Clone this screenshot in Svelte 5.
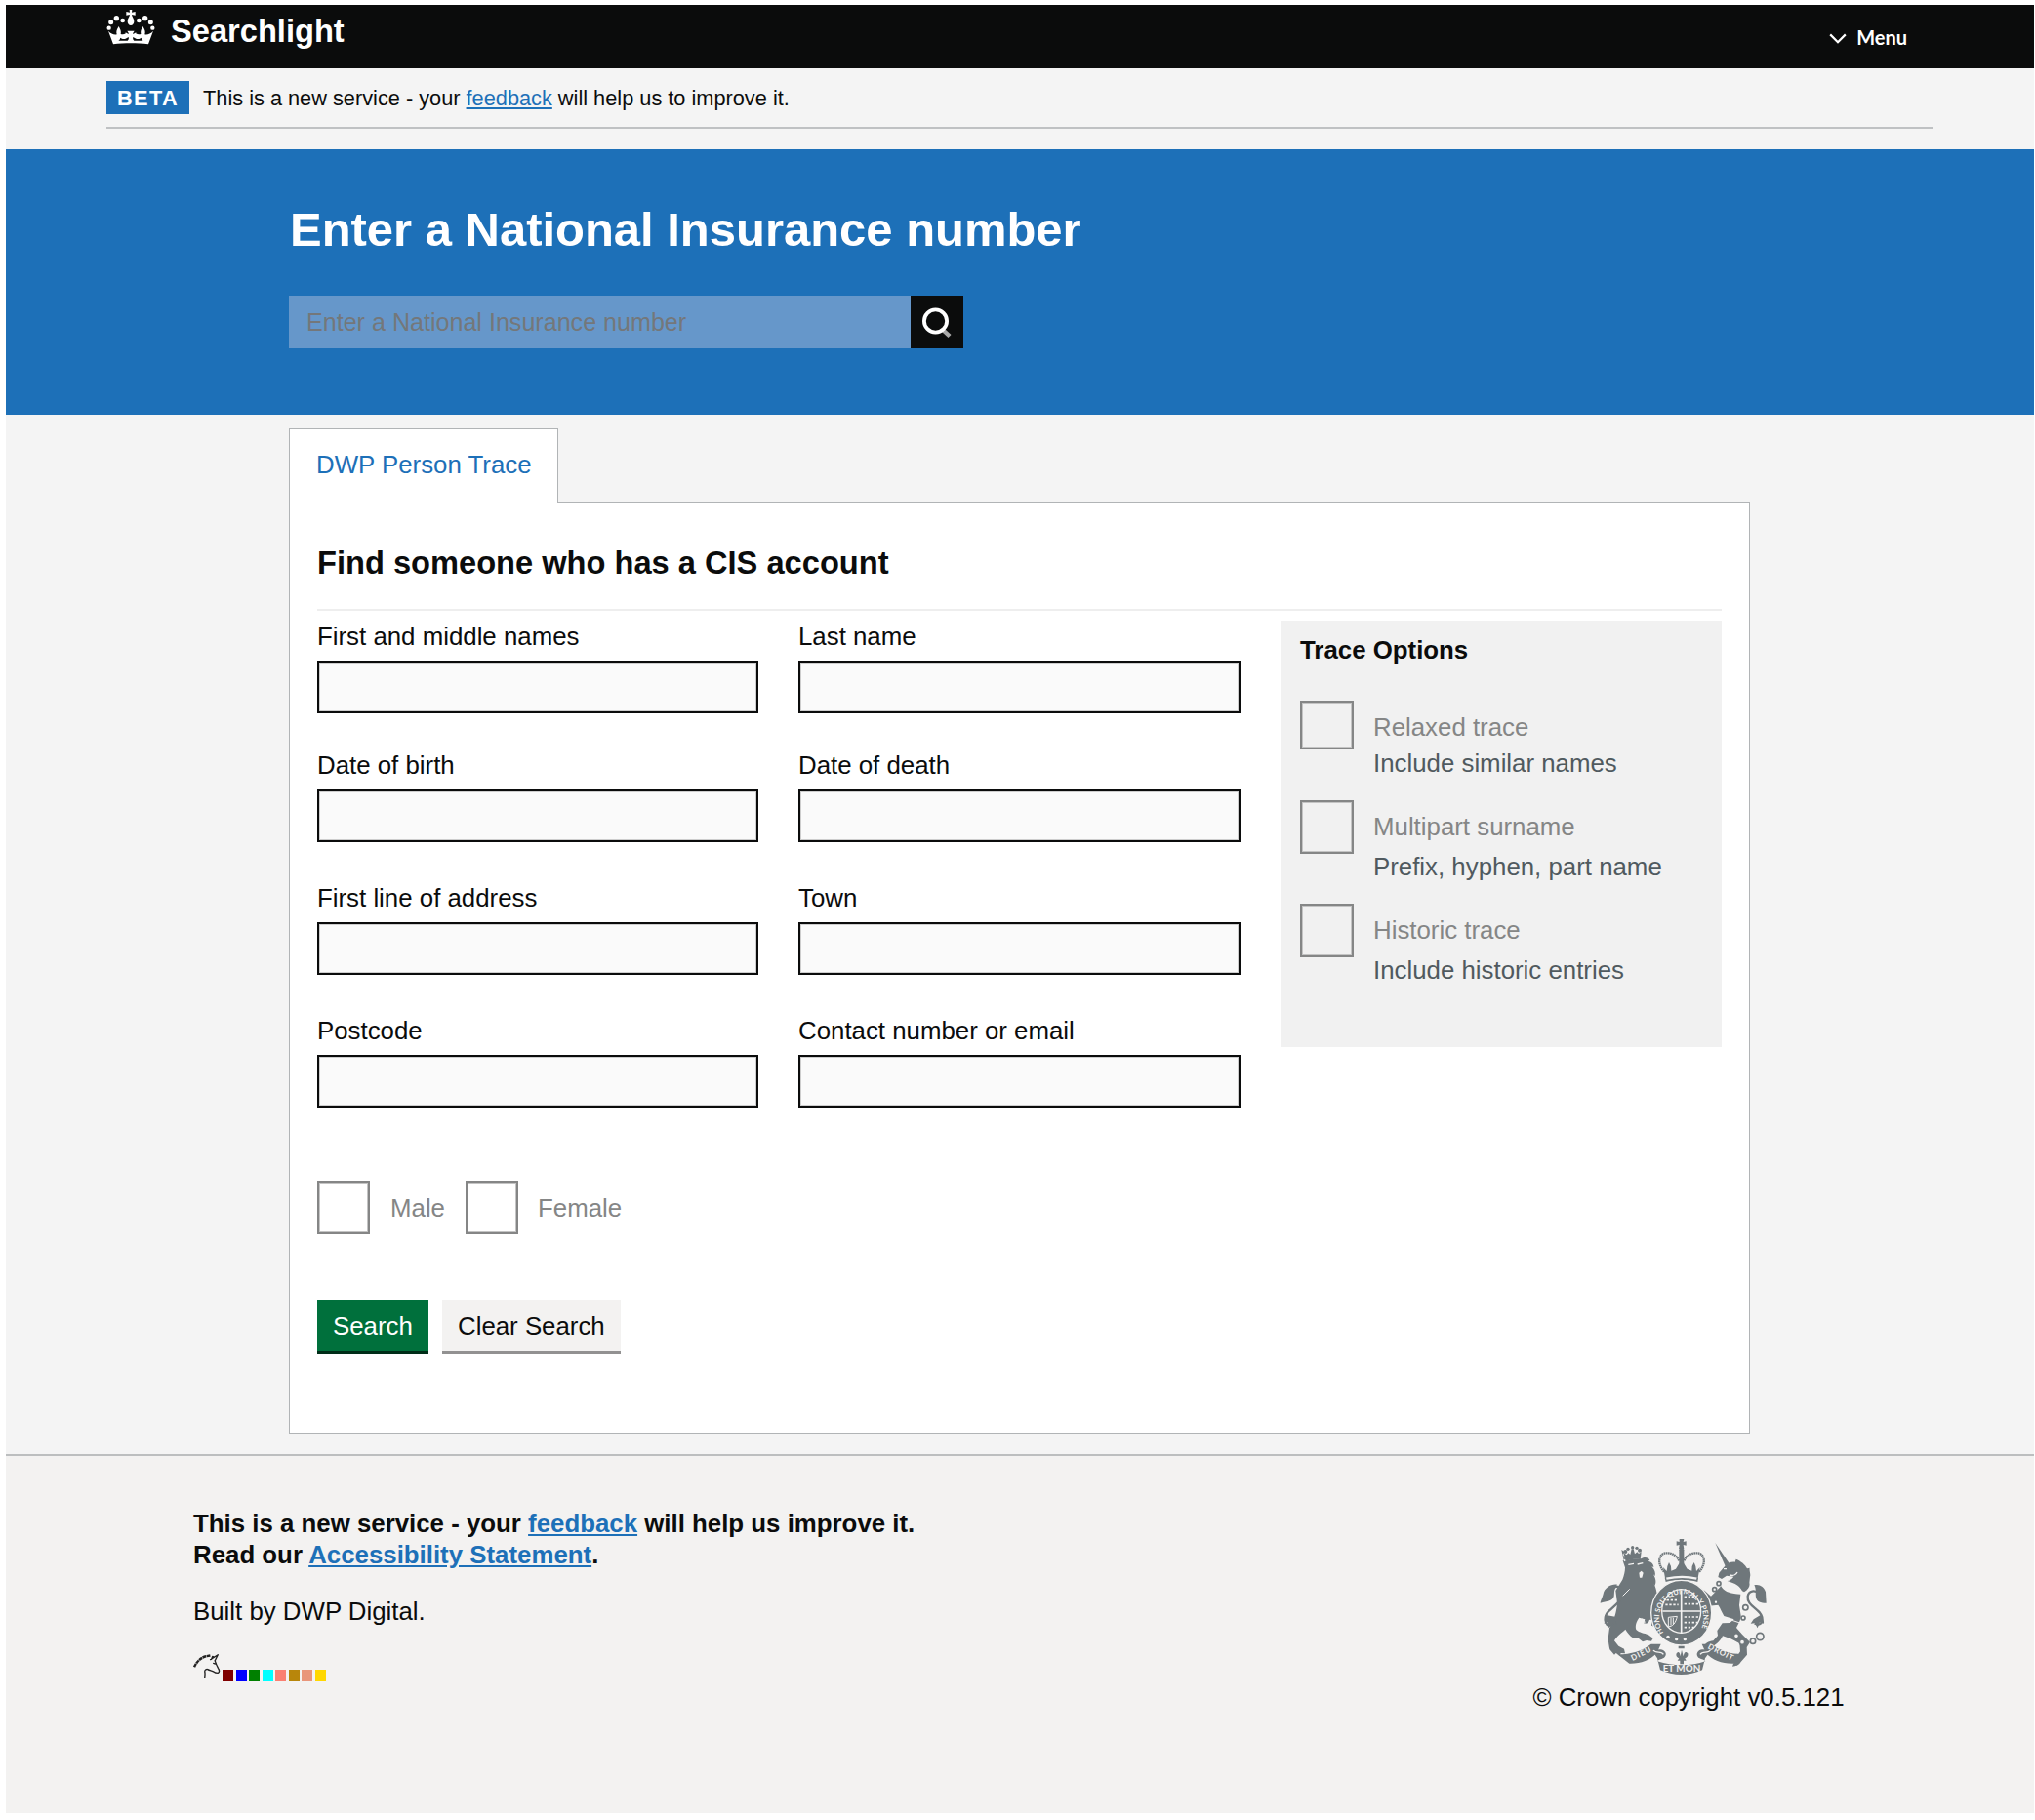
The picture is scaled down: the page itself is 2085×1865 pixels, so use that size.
<script lang="ts">
  const fields = [
    'First and middle names', 'Last name',
    'Date of birth', 'Date of death',
    'First line of address', 'Town',
    'Postcode', 'Contact number or email'
  ];
  const options = [
    { label: 'Relaxed trace', hint: 'Include similar names', size: 'short' },
    { label: 'Multipart surname', hint: 'Prefix, hyphen, part name', size: 'tall' },
    { label: 'Historic trace', hint: 'Include historic entries', size: 'tall' }
  ];
  const swatches = ['maroon', 'blue', 'green', 'cyan', 'salmon', 'darkgoldenrod', 'darksalmon', 'gold'];
</script>

<div class="page">
  <header class="top">
    <div class="brand">
      <svg class="crown" viewBox="0 0 150 108" aria-hidden="true">
        <g fill="#fff">
          <circle cx="8" cy="56" r="6.5" /><circle cx="14" cy="38" r="7.5" /><circle cx="31" cy="26" r="8" /><circle cx="50" cy="33" r="7" />
          <circle cx="142" cy="56" r="6.5" /><circle cx="136" cy="38" r="7.5" /><circle cx="119" cy="26" r="8" /><circle cx="100" cy="33" r="7" />
          <path d="M71 0h8l-1 8 11-2v11l-11-2c1 7 7 13 7 21 0 6-4 12-10 12s-10-6-10-12c0-8 6-14 7-21l-11 2V6l11 2z" />
          <path fill-rule="evenodd" d="M21 106 6 65c8 9 18 13 26 11-3-8 0-16 6-25 5 9 8 16 6 24 6 2 11 1 15-2v16c-7 2-12 0-16-3-1 5-3 7-6 9h28c4-3 4-7 3-11l-9 5V70l9 5c1-4-1-6-4-10h22c-3 4-5 6-4 10l9-5v19l-9-5c-1 4-1 8 3 11h28c-3-2-5-4-6-9-4 3-9 5-16 3V73c4 3 9 4 15 2-2-8 1-15 6-24 6 9 9 17 6 25 8 2 18-2 26-11l-15 41c-34-4-74-4-108 0z" />
        </g>
      </svg>
      <span class="brand-name">Searchlight</span>
    </div>
    <div class="menu">
      <svg class="chevron" viewBox="0 0 18 11" aria-hidden="true"><path d="M1.2 1.4 9 9.2l7.8-7.8" fill="none" stroke="#fff" stroke-width="2.2" /></svg>
      <span>Menu</span>
    </div>
  </header>

  <div class="phase">
    <div class="phase-inner">
      <strong class="tag">BETA</strong>
      <span class="phase-text">This is a new service - your <a>feedback</a> will help us to improve it.</span>
    </div>
  </div>

  <section class="hero">
    <h1>Enter a National Insurance number</h1>
    <div class="search">
      <div class="search-box">Enter a National Insurance number</div>
      <div class="search-button">
        <svg viewBox="0 0 54 54" aria-hidden="true">
          <path d="m33.5 35.5 6.5 6" stroke="#a9a9a9" stroke-width="4.4" fill="none" />
          <circle cx="25.5" cy="26" r="11.6" stroke="#fff" stroke-width="3.8" fill="none" />
        </svg>
      </div>
    </div>
  </section>

  <main>
    <div class="tab">DWP Person Trace</div>
    <div class="panel">
      <h2>Find someone who has a CIS account</h2>
      <div class="columns">
        <div class="fields">
          {#each fields as f}
            <div class="field">
              <span class="label">{f}</span>
              <div class="input"></div>
            </div>
          {/each}
        </div>
        <aside class="trace">
          <h3>Trace Options</h3>
          {#each options as o}
            <div class="option {o.size}">
              <div class="check"></div>
              <div class="option-text">
                <span class="option-label">{o.label}</span>
                <span class="hint">{o.hint}</span>
              </div>
            </div>
          {/each}
        </aside>
      </div>
      <div class="sexes">
        <div class="check"></div><span class="sex male">Male</span>
        <div class="check"></div><span class="sex">Female</span>
      </div>
      <div class="buttons">
        <div class="button primary">Search</div>
        <div class="button secondary">Clear Search</div>
      </div>
    </div>
  </main>

  <footer>
    <div class="foot-left">
      <p class="bold">This is a new service - your <a>feedback</a> will help us improve it.</p>
      <p class="bold">Read our <a>Accessibility Statement</a>.</p>
      <p class="built">Built by DWP Digital.</p>
      <div class="logo-row">
        <svg class="unicorn" viewBox="0 0 81 75" aria-hidden="true">
          <g fill="none" stroke="#222" stroke-linecap="round" stroke-linejoin="round">
            <path d="M3 38C10 23 23 9 40 6l11-2" stroke-width="7" stroke-dasharray="11 1.5" stroke-linecap="butt" />
            <path d="M51 16 73 2 64 20M54 15l3-8 5 2M64 19c3 9 6 16 10 23 4 6 4 12-1 14l-8-1c-7-6-16-6-22-10-5-1-9 2-9 7 2 6 0 12 0 18M60 27l5 2" stroke-width="4" />
          </g>
        </svg>
        {#each swatches as c}
          <i class="swatch" style="background:{c}"></i>
        {/each}
      </div>
    </div>
    <div class="foot-right">
      <svg class="arms" viewBox="0 0 570 465" aria-hidden="true">
        <g fill="#6f777b">
          <!-- centre crown -->
          <path d="M269 21h14l-2 9 9-2v13l-9-2 2 13h-16l2-13-9 2V28l9 2z" />
          <rect x="268" y="50" width="15" height="52" rx="5" />
          <g fill="none" stroke="#6f777b">
            <path d="M222 122c-24-28-16-58 8-58 18 0 32 9 38 25M330 122c24-28 16-58-8-58-18 0-33 9-39 25" stroke-width="7" stroke-dasharray="5 1.5" />
          </g>
          <path d="M219 108l11 12 2-15 5-12 6 12 1 14 14-6 10-16h15l10 16 14 6 1-14 6-12 5 12 2 15 11-12-7 38c-31-8-68-8-99 0z" />
          <path d="M224 140c32-9 72-9 103 0l-2 13c-30-8-68-8-98 0z" />
          <path d="M229 143c31-7 66-7 93 0" fill="none" stroke="#f3f2f1" stroke-width="7" />
          <!-- lion crown -->
          <g>
            <circle cx="125" cy="47" r="5" /><circle cx="103" cy="60" r="6" /><circle cx="111" cy="52" r="5" /><circle cx="138" cy="49" r="5" /><circle cx="147" cy="56" r="6" />
            <path d="M97 64l10 6 5-6 6 5 4-17h6l4 15 7-6 5 5 8-5-3 23c-15-3-30 0-45 6z" />
          </g>
          <!-- lion -->
          <path d="M99 91c14-8 32-11 52-9 12-7 22-4 27 4l-5 3c12 3 17 11 17 19l-6-2c10 10 12 20 10 29l-5-5c8 14 9 24 5 34l-4-7c5 10 8 20 9 28 8 6 12 15 10 24l-9 10c5 14 0 23-7 28l10 12c4 15-3 26-10 32l-10-4 2-16-8-2c-2 9-7 14-17 12l3-13-18-5c-8 12-13 24-9 37 10 10 25 10 38 16l14 10-5 9-15-2-12 4-13-11-17-1c-9-6-17-16-23-26-9 9-28 22-34 35l13 16 17 9 3 14-13-1-3 8-12-8-5 5-14-16c-4-20-5-31-4-43l3-23c14-22 22-50 24-77l-5-38 21-34c5-13 8-25 8-37l-7-21 8-6-8-14 6-7-10-7z" />
          <!-- lion tail -->
          <path d="M67 280C43 303 31 263 50 245c22-20 47-39 45-62-3-20-27-20-35-4" fill="none" stroke="#6f777b" stroke-width="7" />
          <path d="M78 161c-17-3-40 10-43 29-4 15-8 20-9 28 19-6 38-6 42-21 2-13-2-17 10-36zM39 254c4 11 0 20-1 28l10-5 4 18 11-14 15 3c-9-8-6-14 2-22z" />
          <!-- unicorn -->
          <path d="m379 33 43 63-12 9z" />
          <path d="M409 104c9-9 20-14 31-12l3-9c15 6 29 17 34 29l8-2c-2 9 4 18 1 28l-2 18c3 11-4 20-16 28l-6-3c-10-19-27-25-46-31 7-1 14-5 20-13l-22-3-15 10-11-6 3-13z" />
          <path d="M397 166c8 17 28 24 60 25l-4 34 5 32-3 15-11 22 18 20 24 24-10 16 1 23-19 22c-5 10-15 14-26 14l8-22 16-24-2-25-27-14-25-9c-6 14-20 27-29 31l-29 3c2-11 15-17 29-19l14-16-2-15 16-23 23-1 13-11-31-10c-7-12-11-24-18-34l-28 3-13 15 9 18-14-8-2-24 18-15-19-18-23 5-5-10 12-12 23 1 20 18z" />
          <!-- unicorn tail -->
          <path d="M500 280c28 14 27-19 16-32-17-18-40-28-37-51 3-18 23-20 34-8" fill="none" stroke="#6f777b" stroke-width="7" />
          <path d="M499 163c16-4 30 5 35 21l2 34c-17 0-29-4-32-18-2-14 2-25-5-37zM522 253c1 12 8 19 6 28l-12-4-7 18-8-15-13 1 9-13z" />
          <!-- garter -->
          <ellipse cx="275" cy="248" rx="93" ry="100" stroke="#f3f2f1" stroke-width="4" />
          <path d="M266 350h18v8h-18zM260 373c8-10 11 0 12 9l4-20 5 20c2-11 6-18 14-9 2 9-4 14-9 15l4 7h-8v11h-11v-11h-8l5-7c-6-2-11-7-8-15z" />
          <!-- scroll -->
          <path d="M79 376c44-1 74-10 103-32l30 0-12 27c-20 23-52 34-85 33z" />
          <path d="M471 376c-44-1-74-10-103-32l-30 0 12 27c20 23 52 34 85 33z" />
          <path d="M188 368c9-9 26-9 34-3 9 7 6 18-3 23-6 4-14 4-18 9 48 16 105 16 148 0-4-5-12-5-18-9-9-5-11-16-3-23 8-6 25-6 34 3l-14 20-9 36c-40 19-89 19-129 0l-9-36z" />
        </g>
        <g fill="none" stroke="#f3f2f1">
          <ellipse cx="275" cy="243" rx="60" ry="67" stroke-width="4" />
          <path d="M275 178v132M217 243h117" stroke-width="5" />
          <path d="M230 209h36M226 223h40M284 199h34M284 221h44M284 261h46M284 278h42M284 293h30" stroke-width="5" stroke-dasharray="7 5" />
          <path d="M235 290v-28l27-3c-4 20-14 32-27 31zM243 286v-22M250 283v-20" stroke-width="3" />
          <path d="M189 363c8 12 24 1 31 13M364 363c-8 12-24 1-31 13M407 160l56 26" stroke-width="4" />
          <path d="M411 153l8 9 8-3 4 10 9-2 4 9 10-2" stroke-width="4" />
          <path d="M112 100l17-3M140 99l17-4M423 132c12 4 20-1 24-9M405 113h9" stroke-width="4" />
          <path d="M116 175 95 196M154 267c5 2 9 5 8 14M455 279l-24-8" stroke-width="3" />
        </g>
        <path d="m145 125 7-6 6 6-4 15h-7z" fill="#f3f2f1" />
        <g fill="#f3f2f1"><circle cx="234" cy="322" r="5" /><circle cx="260" cy="329" r="5" /><circle cx="286" cy="329" r="5" /></g>
        <g fill="#f3f2f1" stroke="#6f777b" stroke-width="5">
          <circle cx="390" cy="158" r="6" /><circle cx="377" cy="176" r="6" /><circle cx="381" cy="215" r="6" /><circle cx="472" cy="232" r="8" /><circle cx="465" cy="264" r="6" /><circle cx="444" cy="319" r="8" /><circle cx="462" cy="338" r="8" /><circle cx="495" cy="335" r="8" /><circle cx="517" cy="321" r="11" />
        </g>
        <g fill="#f3f2f1" class="motto">
          <path id="garter" d="M222 312A68 75 0 1 1 330 309" fill="none" />
          <text font-size="22"><textPath href="#garter" startOffset="3">HONI SOIT QUI MAL Y PENSE</textPath></text>
          <text x="125" y="396" font-size="24" textLength="66" transform="rotate(-27 125 396)">DIEU</text>
          <text x="355" y="357" font-size="24" textLength="84" transform="rotate(27 355 357)">DROIT</text>
          <text x="218" y="430" font-size="26" textLength="116" lengthAdjust="spacingAndGlyphs">ET MON</text>
        </g>
      </svg>
      <p class="copyright">© Crown copyright v0.5.121</p>
    </div>
  </footer>
</div>

<style>
  :global(body) { background: #fff; }
  .page, .page * { box-sizing: border-box; }
  .page {
    width: 2085px;
    height: 1865px;
    padding: 5px 1px 0 6px;
    overflow: hidden;
    font-family: 'Liberation Sans', Arial, sans-serif;
    font-size: 25.84px;
    line-height: 32px;
    color: #0b0c0c;
  }
  h1, h2, h3, p { margin: 0; }
  a { color: #1d70b8; text-decoration: underline; }

  .top {
    height: 65px;
    padding: 0 130px 0 103px;
    background: #0b0c0c;
    color: #fff;
    display: flex;
    justify-content: space-between;
    align-items: flex-start;
  }
  .brand { display: flex; gap: 16px; padding-top: 5px; }
  .crown { width: 50px; height: 36px; display: block; }
  .brand-name { font-size: 32.64px; font-weight: 700; line-height: 44px; }
  .menu {
    display: flex;
    align-items: center;
    gap: 10px;
    padding-top: 17px;
    font-family: Lato, sans-serif;
    font-size: 20px;
    font-weight: 700;
  }
  .chevron { width: 18px; height: 11px; margin-top: 3px; }

  .phase { height: 83px; padding: 0 104px 0 103px; background: #f4f4f4; }
  .phase-inner {
    height: 62px;
    padding-top: 13px;
    border-bottom: 2px solid #bfc1c3;
    display: flex;
    gap: 14px;
    font-size: 21.76px;
  }
  .tag {
    width: 85px;
    height: 34px;
    padding-left: 11px;
    background: #1d70b8;
    color: #fff;
    line-height: 36px;
    letter-spacing: 1.36px;
  }
  .phase-text { line-height: 36px; }

  .hero { height: 272px; padding: 54px 0 0 290px; background: #1d70b8; color: #fff; }
  h1 { padding-left: 1px; font-size: 48.96px; line-height: 56px; }
  .search { display: flex; margin-top: 40px; }
  .search-box {
    width: 637px;
    height: 54px;
    padding-left: 18px;
    background: #6697ca;
    color: #74777a;
    font-size: 25.1px;
    line-height: 54px;
  }
  .search-button { width: 54px; height: 54px; background: #0b0c0c; }
  .search-button svg { display: block; width: 54px; height: 54px; }

  main { height: 1065px; padding: 14px 0 0 290px; background: #f4f4f4; }
  .tab {
    position: relative;
    width: 276px;
    height: 76px;
    padding: 20px 0 0 27px;
    border: 1px solid #b1b4b6;
    border-bottom: 0;
    background: #fff;
    color: #1d70b8;
  }
  .panel {
    width: 1497px;
    height: 955px;
    margin-top: -1px;
    padding: 40px 28px 0;
    border: 1px solid #b1b4b6;
    background: #fff;
  }
  h2 { height: 71px; font-size: 32.64px; line-height: 44px; border-bottom: 2px solid #eee; }
  .columns { display: flex; height: 515px; }
  .fields {
    display: grid;
    grid-template-columns: 452px 453px;
    grid-template-rows: 132px 136px 136px 136px;
    column-gap: 41px;
    padding-top: 10px;
    align-content: start;
  }
  .label { display: block; height: 41px; }
  .input { height: 54px; border: 2px solid #0b0c0c; background: #fafafa; box-shadow: inset 0 0 0 1px #cdcdcd; }
  .trace {
    width: 453px;
    height: 437px;
    margin: 10px 0 0 41px;
    padding: 14px 20px 0;
    background: #f1f1f1;
  }
  h3 { font-size: 25.84px; line-height: 32px; margin-bottom: 36px; }
  .option { display: flex; gap: 20px; height: 106px; }
  .option.short { height: 102px; }
  .check { width: 55px; height: 55px; border: 2px solid #858686; box-shadow: inset 0 0 0 1px #c4c4c4; flex: none; }
  .short .check { height: 50px; }
  .option-text { display: flex; flex-direction: column; padding-top: 11px; }
  .option-label { height: 41px; color: #858686; }
  .short .option-label { height: 37px; }
  .short .option-text { padding-top: 11px; }
  .hint { color: #505a5f; }

  .sexes { display: flex; margin-top: 69px; }
  .sex { padding: 12px 0 0 21px; color: #858686; }
  .male { width: 98px; }
  .male + .check + .sex { padding-left: 20px; }
  .sexes .check { width: 54px; height: 54px; }
  .buttons { display: flex; gap: 14px; margin-top: 68px; }
  .button { height: 55px; padding: 11px 0 0 16px; border-bottom: 3px solid; }
  .primary { width: 114px; background: #00703c; border-color: #002d18; color: #fff; }
  .secondary { width: 183px; background: #f3f2f1; border-color: #929191; }

  footer {
    height: 368px;
    padding: 53px 194px 0 192px;
    border-top: 2px solid #bcbebf;
    background: #f3f2f1;
    display: flex;
    justify-content: space-between;
  }
  .bold { font-weight: 700; }
  .built { margin-top: 26px; }
  .logo-row { display: flex; align-items: flex-end; gap: 2.3px; height: 56px; }
  .unicorn { width: 28px; height: 26px; margin-bottom: 2px; display: block; }
  .swatch { width: 11.2px; height: 12px; }
  .foot-right { display: flex; flex-direction: column; align-items: center; padding-top: 25px; width: 320px; }
  .arms { width: 190px; height: 155px; display: block; flex: none; margin-left: -9px; }
  .motto { font-family: Lato, sans-serif; font-weight: 700; }
  .copyright { margin-top: -2px; white-space: nowrap; }
</style>
